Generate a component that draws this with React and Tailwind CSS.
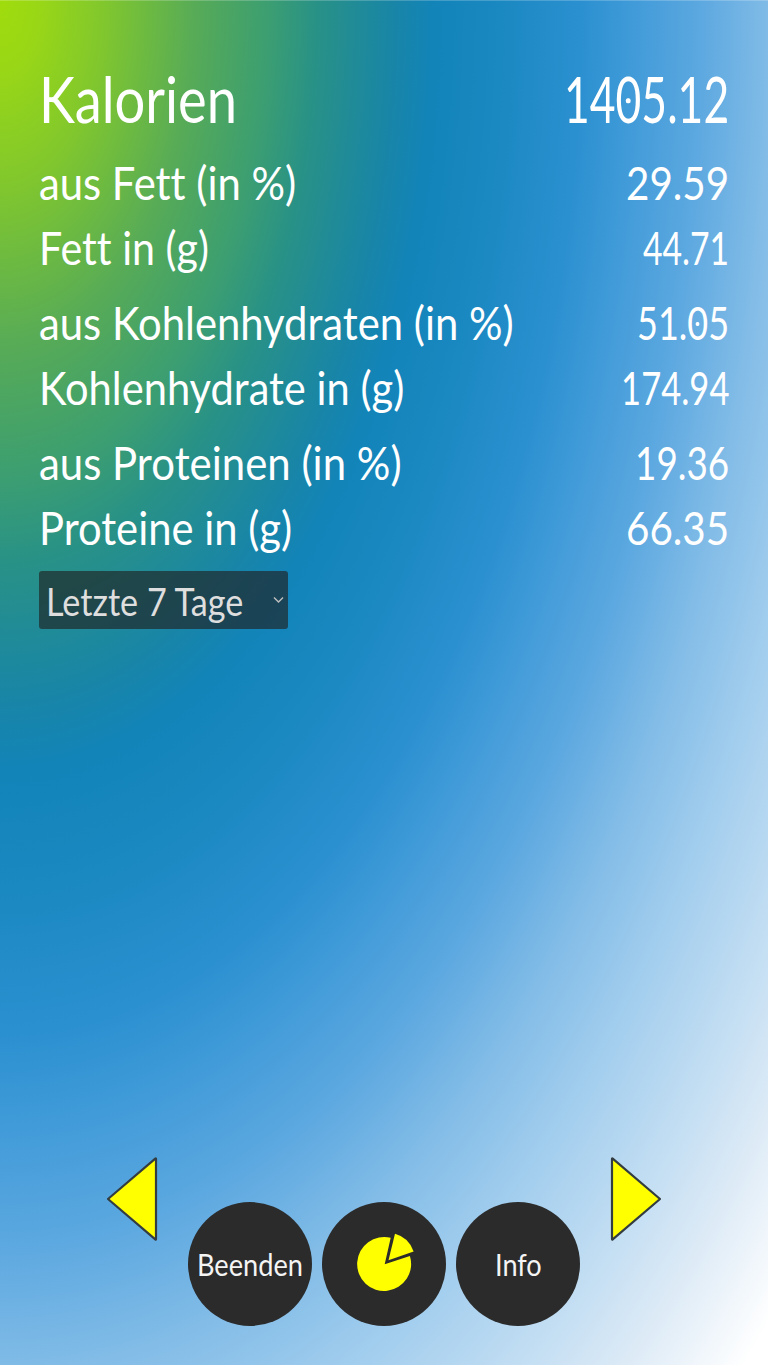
import { useLayoutEffect, useRef } from "react";

const groups = [
  [
    { label: "aus Fett (in %)", lw: 257, value: "29.59", vw: 103 },
    { label: "Fett in (g)", lw: 170, value: "44.71", vw: 86 },
  ],
  [
    { label: "aus Kohlenhydraten (in %)", lw: 475, value: "51.05", vw: 92 },
    { label: "Kohlenhydrate in (g)", lw: 365, value: "174.94", vw: 108 },
  ],
  [
    { label: "aus Proteinen (in %)", lw: 363, value: "19.36", vw: 94 },
    { label: "Proteine in (g)", lw: 253, value: "66.35", vw: 103 },
  ],
];

// Condenses a line of text horizontally to the given width.
function Fit({ width, right = false, children }) {
  const ref = useRef(null);
  useLayoutEffect(() => {
    const el = ref.current;
    el.style.transform = `scaleX(${width / el.offsetWidth})`;
  }, [width]);
  return (
    <span
      ref={ref}
      className={
        right
          ? "inline-block origin-right whitespace-nowrap"
          : "inline-block origin-left whitespace-nowrap"
      }
    >
      {children}
    </span>
  );
}

// Digits with a dotted zero.
function Digits({ text }) {
  return text.split("").map((c, i) =>
    c === "0" ? (
      <span
        key={i}
        className="relative after:absolute after:left-1/2 after:top-[53%] after:h-[0.09em] after:w-[0.11em] after:-translate-x-1/2 after:-translate-y-1/2 after:rounded-full after:bg-white after:content-['']"
      >
        0
      </span>
    ) : (
      c
    )
  );
}

function Round({ children }) {
  return (
    <button className="flex h-[124px] w-[124px] items-center justify-center rounded-full bg-[#2b2b2b] text-[30px] text-[#f4f4f4]">
      {children}
    </button>
  );
}

export default function App() {
  return (
    <main className="flex h-[1365px] w-[768px] flex-col justify-between overflow-hidden bg-[radial-gradient(ellipse_farthest-corner_at_0_0,#a0dc0c_0%,#99d716_3.5%,#82c82c_9.3%,#57ab57_18%,#3d9f70_24.4%,#289187_29.3%,#1885a8_36.5%,#1284b8_40%,#1a88c1_46%,#2b90d0_53.5%,#3d99d7_57.5%,#5ca8e0_64.5%,#82bce7_71%,#a3ceee_78%,#c5dff3_86%,#dceaf6_91%,#ffffff_98.5%)] px-[39px] pb-[39px] pt-[59px] font-['Lato',sans-serif] text-white [font-variant-ligatures:none] shadow-[inset_0_1px_0_rgba(255,255,255,0.2)]">
      <section>
        <h1 className="flex h-20 justify-between text-[63px] leading-[80px]">
          <Fit width={198}>Kalorien</Fit>
          <Fit width={165} right>
            <Digits text="1405.12" />
          </Fit>
        </h1>
        <div className="mt-[11px] flex flex-col gap-[10px] text-[47px] leading-[65px]">
          {groups.map((rows, i) => (
            <div key={i}>
              {rows.map((r) => (
                <div key={r.label} className="flex h-[65px] justify-between">
                  <Fit width={r.lw}>{r.label}</Fit>
                  <Fit width={r.vw} right>
                    <Digits text={r.value} />
                  </Fit>
                </div>
              ))}
            </div>
          ))}
        </div>
        <button className="mt-[11px] flex h-[58px] w-[249px] items-center justify-between rounded-[3px] bg-[#1f1f1f]/64 pl-[7px] pr-1 text-[38px] leading-[58px] text-[#dedede]">
          <span className="w-[200px] pt-[1px] text-left">
            <Fit width={197}>Letzte 7 Tage</Fit>
          </span>
          <svg width="11" height="8" viewBox="0 0 11 8" fill="none" stroke="#bdbdbd" strokeWidth="1.5">
            <path d="M1 1.5 5.5 6 10 1.5" />
          </svg>
        </button>
      </section>
      <nav className="flex h-[170px] items-start justify-between px-[67px]">
        <svg width="52" height="86" viewBox="0 0 52 86" fill="#ff0" stroke="#333c40" strokeWidth="2.2" strokeLinejoin="round">
          <path d="M49.3 2.6Q50 2 50 3V83Q50 84 49.3 83.4L2 43Z" />
        </svg>
        <div className="flex gap-[10px] self-end">
          <Round>
            <span className="w-[106px] text-left">
              <Fit width={106}>Beenden</Fit>
            </span>
          </Round>
          <Round>
            <svg width="64" height="64" viewBox="-32 -32 64 64" fill="#ff0">
              <path d="M6.7-26.2A27 27 0 1 0 25.9-8.1L.7.3Z" />
              <path d="M11-30.3A27 27 0 0 1 29.6-12.4L4.5-3.7Z" />
            </svg>
          </Round>
          <Round>
            <span className="w-[47px] text-left">
              <Fit width={47}>Info</Fit>
            </span>
          </Round>
        </div>
        <svg width="52" height="86" viewBox="0 0 52 86" fill="#ff0" stroke="#333c40" strokeWidth="2.2" strokeLinejoin="round">
          <path d="M2.7 2.6Q2 2 2 3V83Q2 84 2.7 83.4L50 43Z" />
        </svg>
      </nav>
    </main>
  );
}
